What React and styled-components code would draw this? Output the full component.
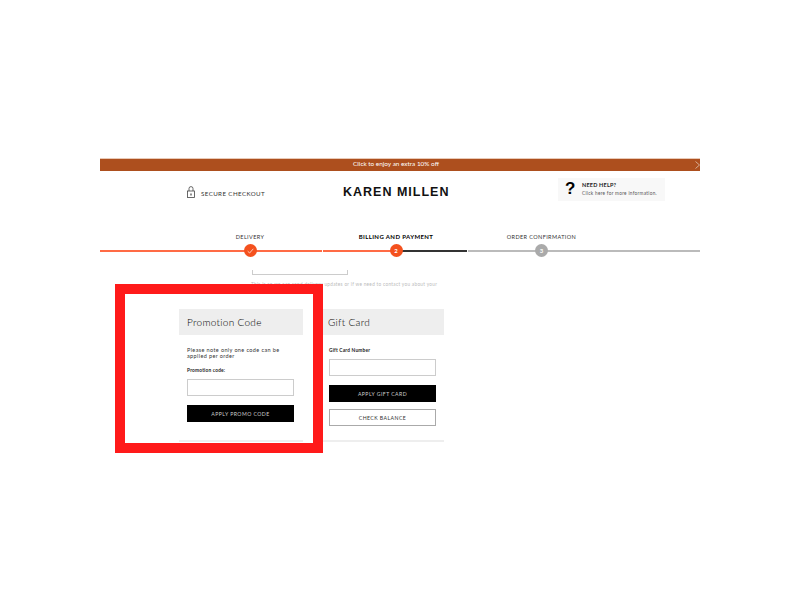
import React from 'react';
import styled, { createGlobalStyle } from 'styled-components';

const Global = createGlobalStyle`
  html, body { margin: 0; padding: 0; background: #fff; }
  body { font-family: "Lato", "Liberation Sans", sans-serif; color: #222; }
  * { box-sizing: border-box; }
`;
const Page = styled.div`
  position: relative;
  width: 800px;
  height: 600px;
  padding: 158px 100px 0;
  overflow: hidden;
`;
const Banner = styled.div`
  position: relative;
  height: 13px;
  padding-right: 8px;
  background: #ad4f1e;
  border-top: 1px solid #e9c9b6;
  color: #fff;
  font-size: 6.4px;
  line-height: 9px;
  text-align: center;
`;
const Chevron = styled.svg`
  position: absolute;
  right: 0;
  top: 2px;
  width: 5px;
  height: 8px;
`;
const Header = styled.header`
  display: flex;
  align-items: center;
  height: 34px;
  margin-top: 1px;
`;
const Secure = styled.div`
  display: flex;
  align-items: center;
  gap: 6px;
  width: 243px;
  margin-top: 8px;
  padding-left: 87px;
  font-size: 6.2px;
  letter-spacing: 0.4px;
  color: #333;
`;
const LockIcon = styled.svg`
  margin-top: -2px;
`;
const Logo = styled.div`
  width: 215px;
  margin-top: 6px;
  font-family: "Liberation Sans", sans-serif;
  font-weight: 700;
  font-size: 12.5px;
  letter-spacing: 1px;
  color: #111;
  white-space: nowrap;
`;
const Help = styled.div`
  display: flex;
  align-items: center;
  width: 107px;
  height: 23px;
  background: #f8f8f8;
  padding-left: 8px;
`;
const Question = styled.span`
  width: 16px;
  margin-left: -1px;
  font-family: "Liberation Sans", sans-serif;
  font-weight: 700;
  font-size: 17px;
  color: #000;
`;
const HelpCopy = styled.div`
  padding-top: 1px;
  margin-left: 1px;
`;
const HelpTitle = styled.div`
  font-size: 5.5px;
  font-weight: 700;
  line-height: 7px;
  letter-spacing: 0.2px;
  color: #222;
`;
const HelpText = styled.div`
  font-size: 4.7px;
  line-height: 8px;
  letter-spacing: 0.3px;
  color: #555;
`;
const Stepper = styled.div`
  display: grid;
  grid-template-columns: 222px 144px 232px;
  column-gap: 1px;
  margin-top: 27px;
`;
const Step = styled.div`
  position: relative;
  display: flex;
  flex-direction: column;
  align-items: center;
  height: 28px;
  padding-left: ${p => p.$left || 0}px;
  padding-right: ${p => p.$right || 0}px;
  &::after {
    content: "";
    position: absolute;
    left: 0;
    right: 0;
    top: 17px;
    height: 2px;
    background: ${p => p.$line};
  }
`;
const StepLabel = styled.div`
  font-size: ${p => (p.$strong ? 6 : 5.5)}px;
  line-height: 8px;
  letter-spacing: 0.4px;
  white-space: nowrap;
  color: ${p => (p.$strong ? '#000' : '#333')};
  font-weight: ${p => (p.$strong ? 700 : 400)};
`;
const Node = styled.div`
  position: relative;
  z-index: 1;
  display: flex;
  align-items: center;
  justify-content: center;
  width: 13px;
  height: 13px;
  margin-top: 3px;
  border-radius: 50%;
  background: ${p => p.$bg};
  color: #fff;
  font-size: 6px;
  font-weight: 700;
`;
const Bracket = styled.div`
  width: 96px;
  height: 5px;
  margin: 9px 0 0 152px;
  border: 1px solid #ccc;
  border-top: 0;
`;
const Hint = styled.p`
  width: 189px;
  margin: 5px 0 0 151px;
  font-size: 4.7px;
  line-height: 8px;
  letter-spacing: 0.3px;
  color: #bbb;
`;
const Cards = styled.div`
  display: flex;
  gap: 17px;
  margin: 13px 0 0 79px;
`;
const Card = styled.section`
  width: 124px;
  height: 133px;
  border-bottom: 2px solid #eee;
`;
const CardHead = styled.h2`
  margin: 0;
  height: 26px;
  padding-left: 8px;
  background: #eee;
  font-size: 10px;
  font-weight: 300;
  line-height: 26px;
  letter-spacing: 0.3px;
  color: #000;
`;
const CardBody = styled.div`
  display: flex;
  flex-direction: column;
  padding: 12px 0 0 ${p => p.$left}px;
`;
const Note = styled.p`
  margin: 0 0 8px;
  width: 107px;
  font-size: 5.5px;
  line-height: 6px;
  letter-spacing: 0.38px;
  color: #333;
`;
const Label = styled.label`
  display: block;
  height: 7px;
  margin-bottom: 5px;
  font-size: 4.8px;
  font-weight: 700;
  line-height: 7px;
  letter-spacing: 0.2px;
  color: #222;
`;
const Field = styled.div`
  width: 107px;
  height: 17px;
  margin-bottom: 9px;
  border: 1px solid #ccc;
  background: #fff;
`;
const Button = styled.button`
  display: block;
  width: 107px;
  height: 17px;
  padding: 0;
  margin-bottom: ${p => p.$gap || 0}px;
  border: ${p => (p.$outline ? '1px solid #aaa' : '0')};
  background: ${p => (p.$outline ? '#fff' : '#000')};
  color: ${p => (p.$outline ? '#333' : '#ccc')};
  font-family: inherit;
  font-size: 5.2px;
  letter-spacing: 0.42px;
`;
const Highlight = styled.div`
  position: absolute;
  left: 115px;
  top: 284px;
  width: 208px;
  height: 169px;
  border: 10px solid #ff1a1a;
  pointer-events: none;
`;

export default function App() {
  return (
    <Page>
      <Global />
      <Banner>
        Click to enjoy an extra 10% off
        <Chevron viewBox="0 0 5 8" fill="none" stroke="#e8d5c8" strokeWidth="0.7"><path d="M0.5 0.5 4.5 4 0.5 7.5" /></Chevron>
      </Banner>
      <Header>
        <Secure>
          <LockIcon width="8" height="12" viewBox="0 0 8 12" fill="none" stroke="#444" strokeWidth="0.8">
            <path d="M2 5V2.6a2 2 0 0 1 4 0V5" />
            <rect x="0.5" y="5" width="7" height="6.5" />
            <path d="M4 7.5v2" strokeWidth="1.2" />
          </LockIcon>
          SECURE CHECKOUT
        </Secure>
        <Logo>KAREN MILLEN</Logo>
        <Help>
          <Question>?</Question>
          <HelpCopy>
            <HelpTitle>NEED HELP?</HelpTitle>
            <HelpText>Click here for more information.</HelpText>
          </HelpCopy>
        </Help>
      </Header>
      <Stepper>
        <Step $left={78} $line="#ff6b45">
          <StepLabel>DELIVERY</StepLabel>
          <Node $bg="#f4511e">
            <svg width="7" height="6" viewBox="0 0 7 6" fill="none" stroke="#fff" strokeWidth="0.7"><path d="M0.7 3.2 2.6 5 6.3 0.8" /></svg>
          </Node>
        </Step>
        <Step $left={2} $line="linear-gradient(90deg, #ff6b45 50%, #333 50%)">
          <StepLabel $strong>BILLING AND PAYMENT</StepLabel>
          <Node $bg="#f4511e">2</Node>
        </Step>
        <Step $right={85} $line="#bbb">
          <StepLabel>ORDER CONFIRMATION</StepLabel>
          <Node $bg="#aaa">3</Node>
        </Step>
      </Stepper>
      <Bracket />
      <Hint>This is so we can send delivery updates or if we need to contact you about your order</Hint>
      <Cards>
        <Card>
          <CardHead>Promotion Code</CardHead>
          <CardBody $left={8}>
            <Note>Please note only one code can be applied per order</Note>
            <Label>Promotion code:</Label>
            <Field />
            <Button>APPLY PROMO CODE</Button>
          </CardBody>
        </Card>
        <Card>
          <CardHead>Gift Card</CardHead>
          <CardBody $left={9}>
            <Label>Gift Card Number</Label>
            <Field />
            <Button $gap={7}>APPLY GIFT CARD</Button>
            <Button $outline>CHECK BALANCE</Button>
          </CardBody>
        </Card>
      </Cards>
      <Highlight />
    </Page>
  );
}
